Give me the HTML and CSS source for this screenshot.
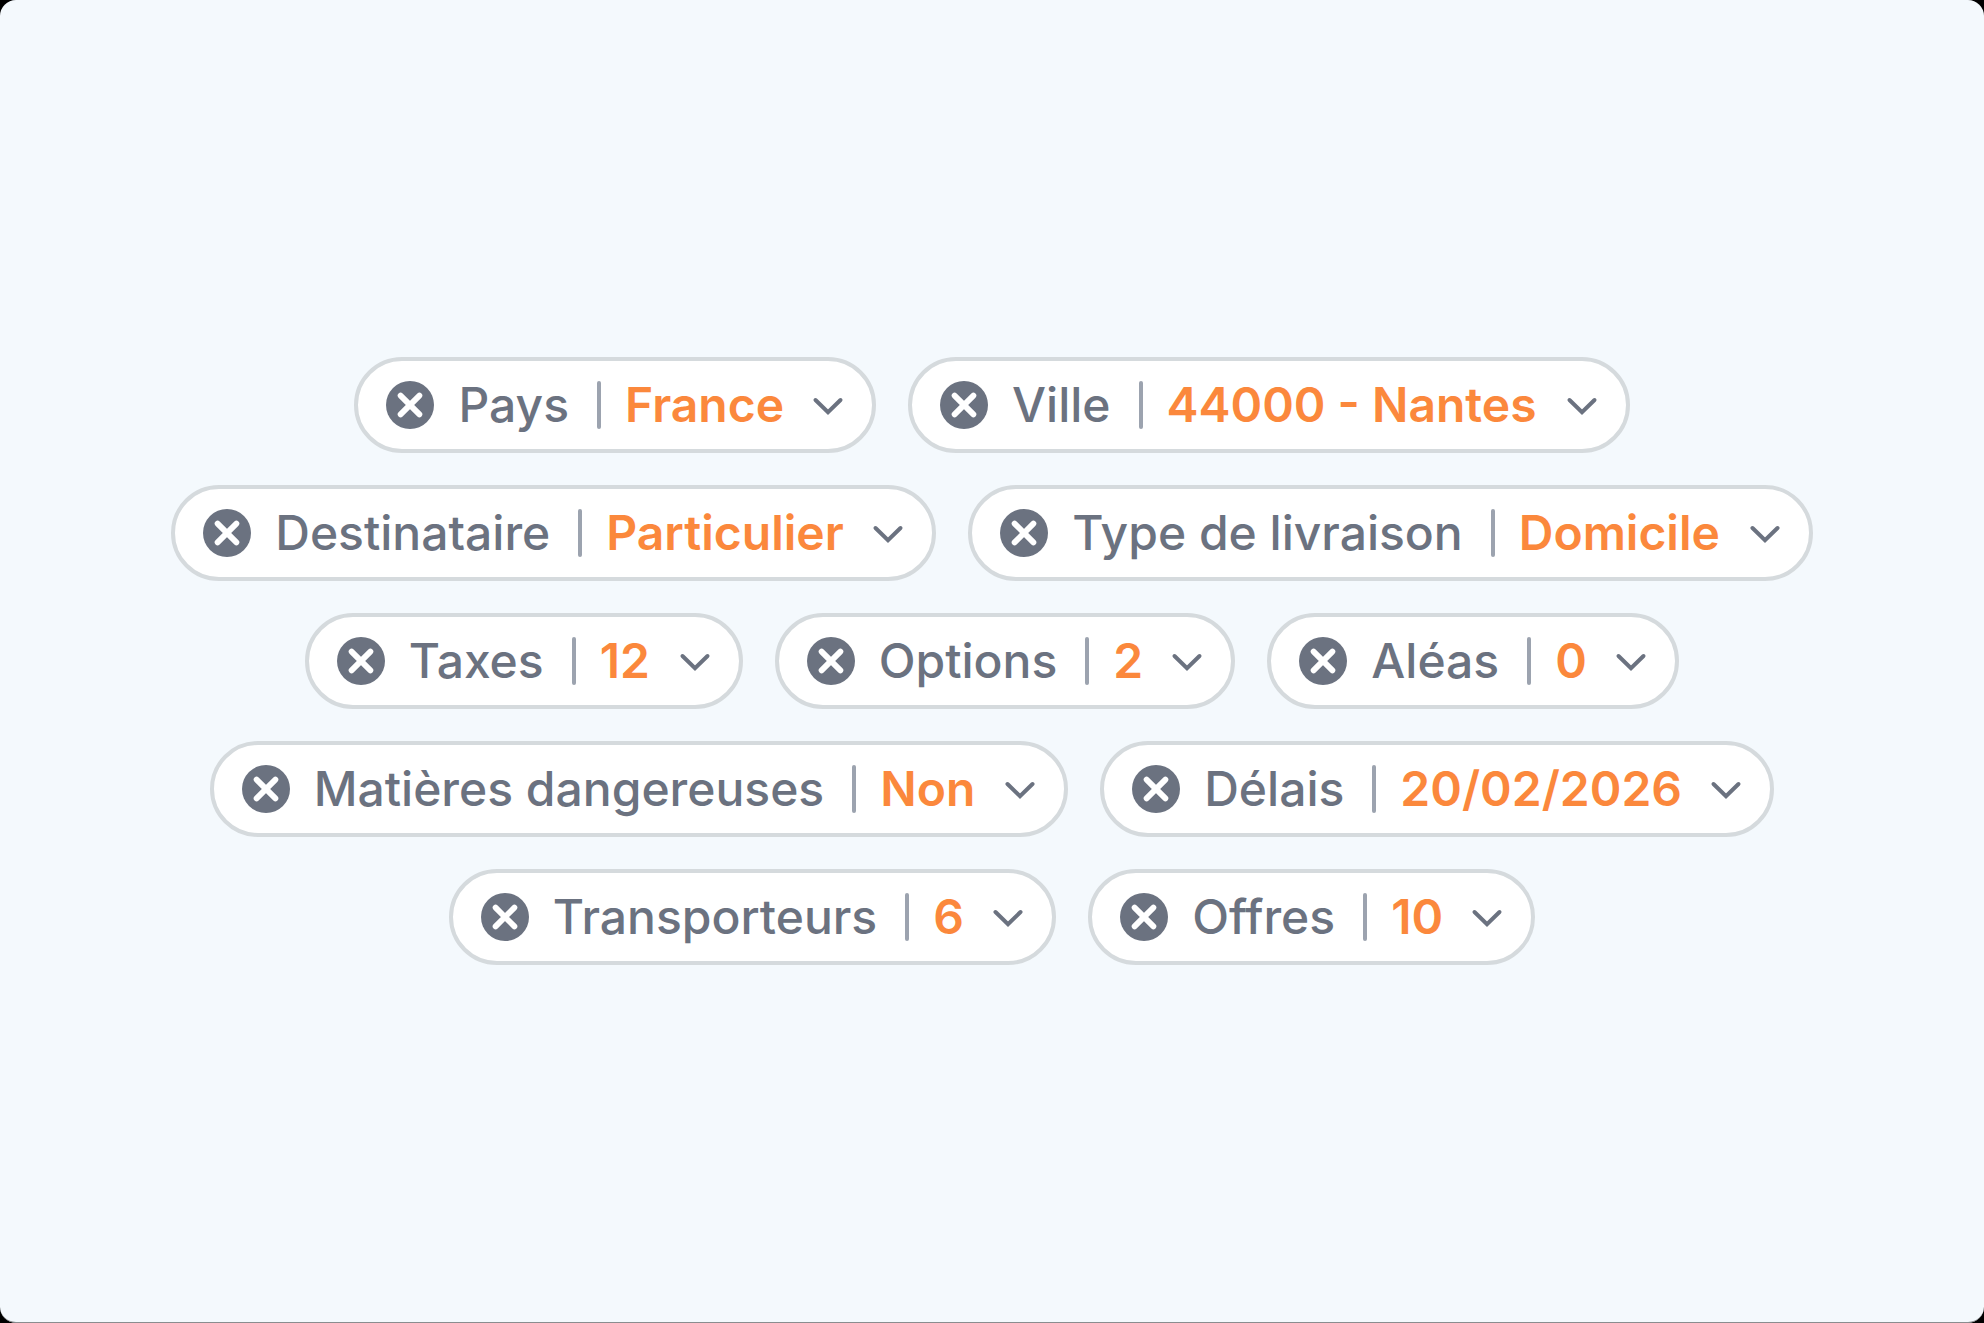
FILE: index.html
```html
<!DOCTYPE html>
<html lang="fr">
<head>
  <meta charset="UTF-8">
  <meta name="viewport" content="width=device-width, initial-scale=1">
  <title>Filtres de livraison</title>
  <link rel="stylesheet" href="styles.css">
</head>
<body>
  <!-- Shared icons -->
  <svg class="sprite" aria-hidden="true">
    <symbol id="icon-close" viewBox="0 0 48 48">
      <circle cx="24" cy="24" r="24" fill="currentColor"/>
      <path d="M14.6 14.6L33.4 33.4M33.4 14.6L14.6 33.4" fill="none" stroke="#fff" stroke-width="5.8" stroke-linecap="round"/>
    </symbol>
    <symbol id="icon-chevron" viewBox="0 0 32 24">
      <path d="M3.5 7L16 19.2L28.5 7" fill="none" stroke="currentColor" stroke-width="4" stroke-linecap="round" stroke-linejoin="miter"/>
    </symbol>
  </svg>

  <main class="panel">
    <form class="filters">
      <div class="filter">
        <button type="button" class="remove" aria-label="Retirer Pays"><svg><use href="#icon-close"/></svg></button>
        <label for="pays">Pays</label>
        <span class="divider"></span>
        <div class="picker">
          <select id="pays"><option>France</option></select>
          <svg class="chevron"><use href="#icon-chevron"/></svg>
        </div>
      </div>

      <div class="filter">
        <button type="button" class="remove" aria-label="Retirer Ville"><svg><use href="#icon-close"/></svg></button>
        <label for="ville">Ville</label>
        <span class="divider"></span>
        <div class="picker">
          <select id="ville"><option>44000 - Nantes</option></select>
          <svg class="chevron"><use href="#icon-chevron"/></svg>
        </div>
      </div>

      <div class="filter">
        <button type="button" class="remove" aria-label="Retirer Destinataire"><svg><use href="#icon-close"/></svg></button>
        <label for="destinataire">Destinataire</label>
        <span class="divider"></span>
        <div class="picker">
          <select id="destinataire"><option>Particulier</option></select>
          <svg class="chevron"><use href="#icon-chevron"/></svg>
        </div>
      </div>

      <div class="filter">
        <button type="button" class="remove" aria-label="Retirer Type de livraison"><svg><use href="#icon-close"/></svg></button>
        <label for="livraison">Type de livraison</label>
        <span class="divider"></span>
        <div class="picker">
          <select id="livraison"><option>Domicile</option></select>
          <svg class="chevron"><use href="#icon-chevron"/></svg>
        </div>
      </div>

      <div class="filter">
        <button type="button" class="remove" aria-label="Retirer Taxes"><svg><use href="#icon-close"/></svg></button>
        <label for="taxes">Taxes</label>
        <span class="divider"></span>
        <div class="picker">
          <select id="taxes"><option>12</option></select>
          <svg class="chevron"><use href="#icon-chevron"/></svg>
        </div>
      </div>

      <div class="filter">
        <button type="button" class="remove" aria-label="Retirer Options"><svg><use href="#icon-close"/></svg></button>
        <label for="options">Options</label>
        <span class="divider"></span>
        <div class="picker">
          <select id="options"><option>2</option></select>
          <svg class="chevron"><use href="#icon-chevron"/></svg>
        </div>
      </div>

      <div class="filter">
        <button type="button" class="remove" aria-label="Retirer Aléas"><svg><use href="#icon-close"/></svg></button>
        <label for="aleas">Aléas</label>
        <span class="divider"></span>
        <div class="picker">
          <select id="aleas"><option>0</option></select>
          <svg class="chevron"><use href="#icon-chevron"/></svg>
        </div>
      </div>

      <div class="filter">
        <button type="button" class="remove" aria-label="Retirer Matières dangereuses"><svg><use href="#icon-close"/></svg></button>
        <label for="matieres">Matières dangereuses</label>
        <span class="divider"></span>
        <div class="picker">
          <select id="matieres"><option>Non</option></select>
          <svg class="chevron"><use href="#icon-chevron"/></svg>
        </div>
      </div>

      <div class="filter">
        <button type="button" class="remove" aria-label="Retirer Délais"><svg><use href="#icon-close"/></svg></button>
        <label for="delais">Délais</label>
        <span class="divider"></span>
        <div class="picker">
          <select id="delais"><option>20/02/2026</option></select>
          <svg class="chevron"><use href="#icon-chevron"/></svg>
        </div>
      </div>

      <div class="filter">
        <button type="button" class="remove" aria-label="Retirer Transporteurs"><svg><use href="#icon-close"/></svg></button>
        <label for="transporteurs">Transporteurs</label>
        <span class="divider"></span>
        <div class="picker">
          <select id="transporteurs"><option>6</option></select>
          <svg class="chevron"><use href="#icon-chevron"/></svg>
        </div>
      </div>

      <div class="filter">
        <button type="button" class="remove" aria-label="Retirer Offres"><svg><use href="#icon-close"/></svg></button>
        <label for="offres">Offres</label>
        <span class="divider"></span>
        <div class="picker">
          <select id="offres"><option>10</option></select>
          <svg class="chevron"><use href="#icon-chevron"/></svg>
        </div>
      </div>
    </form>
  </main>
</body>
</html>
```
FILE: styles.css
```css
* {
  box-sizing: border-box;
}

body {
  margin: 0;
  background: #000;
  font-family: Inter, "Liberation Sans", sans-serif;
  font-size: 48px;
  line-height: 56px;
}

.sprite {
  display: none;
}

.panel {
  display: flex;
  align-items: center;
  justify-content: center;
  min-height: 100vh;
  padding: 32px 128px;
  background: #f4f9fd;
  border-bottom: 1px solid #8a8d8f;
  border-radius: 16px;
}

.filters {
  display: flex;
  flex-wrap: wrap;
  justify-content: center;
  gap: 32px;
}

.filter {
  display: flex;
  align-items: center;
  height: 96px;
  padding: 0 28px;
  background: #fff;
  border: 4px solid #d5dadd;
  border-radius: 48px;
  color: #6b7280;
}

.remove {
  width: 48px;
  height: 48px;
  margin-right: 24px;
  padding: 0;
  border: none;
  background: none;
  color: inherit;
  cursor: pointer;
}

.remove svg {
  display: block;
  width: 48px;
  height: 48px;
}

label {
  font-weight: 500;
  white-space: nowrap;
}

.divider {
  width: 4px;
  height: 48px;
  margin: 0 24px 0 28px;
  border-radius: 2px;
  background: #9ca3af;
}

/* The select fills the cell, the chevron sits over its right padding */
.picker {
  display: grid;
  align-items: center;
}

.picker select {
  grid-area: 1 / 1;
  appearance: none;
  margin: 0;
  padding: 0 60px 0 0;
  border: none;
  background: none;
  color: #fb883c;
  font: inherit;
  font-weight: 600;
  cursor: pointer;
}

.chevron {
  grid-area: 1 / 1;
  justify-self: end;
  width: 32px;
  height: 24px;
  pointer-events: none;
}
```
